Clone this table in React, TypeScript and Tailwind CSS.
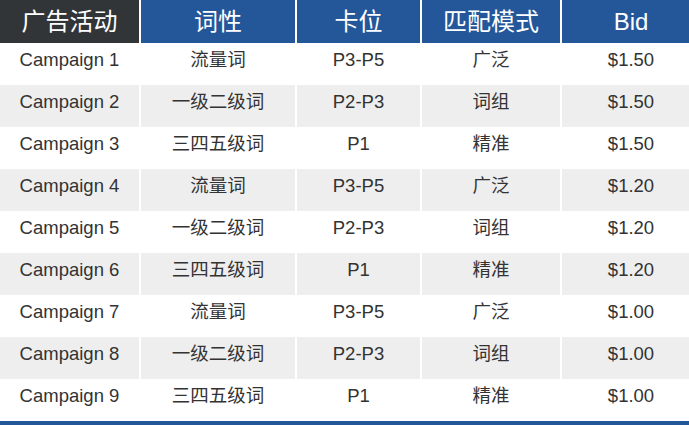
import React from 'react'

const headers = ['广告活动', '词性', '卡位', '匹配模式', 'Bid']

const types = [
  ['流量词', 'P3-P5', '广泛'],
  ['一级二级词', 'P2-P3', '词组'],
  ['三四五级词', 'P1', '精准'],
]

const bids = ['$1.50', '$1.20', '$1.00']

const rows = Array.from({ length: 9 }, (_, i) => [
  `Campaign ${i + 1}`,
  ...types[i % 3],
  bids[Math.floor(i / 3)],
])

export default function App() {
  return (
    <div
      className="w-[689px] h-[425px] bg-white overflow-hidden"
      style={{ fontFamily: '"Liberation Sans", "Noto Sans CJK SC", Arial, sans-serif' }}
    >
      {/* table is a little wider than the view; last column gets clipped */}
      <div className="w-[700px]">
        <div className="grid grid-cols-[139px_154px_123px_138px_138px] gap-x-[2px]">
          {headers.map((h, i) => (
            <div
              key={h}
              className={`h-[43px] flex items-center justify-center text-[24px] text-white ${
                i === 0 ? 'bg-[#323538]' : 'bg-[#24579a]'
              }`}
            >
              {h}
            </div>
          ))}
          {rows.map((row, r) =>
            row.map((cell, c) => (
              <div
                key={`${r}-${c}`}
                className={`h-[42px] flex items-center justify-center pb-[9px] text-[18.5px] text-[#333333] ${
                  r % 2 === 1 ? 'bg-[#eeeeee]' : 'bg-white'
                }`}
              >
                {cell}
              </div>
            ))
          )}
        </div>
        <div className="h-[4px] bg-[#24579a]" />
      </div>
    </div>
  )
}
